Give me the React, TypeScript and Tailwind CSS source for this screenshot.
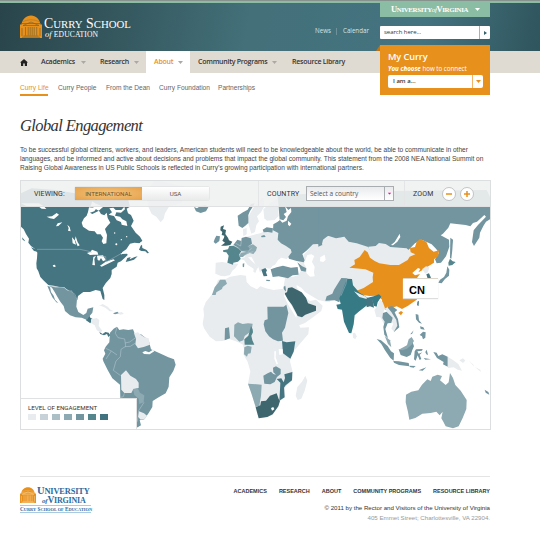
import type { ReactNode } from "react";

const SANS = "font-['Open_Sans','Noto_Sans',sans-serif]";
const ARIAL = "font-['Liberation_Sans',Arial,sans-serif]";
const SERIF = "font-['Liberation_Serif',serif]";
const TECH = "font-[Roboto,sans-serif]";

const C = {
  light: "#e8ecef",
  soft: "#8da9b1",
  mid: "#7295a0",
  dark: "#467582",
  france: "#56868d",
  deep: "#3d666e",
  teal: "#367a86",
  sel: "#e8901c",
  sea: "#ffffff",
};

type Shape = [string, string];

const northAmerica: Shape[] = [
  [C.light, "390,-20 400,20 410,42 424,50 437,67 446,56 450,40 462,20 500,8 510,-40 420,-60"],
  [C.dark, "18,-20 50,-35 120,-30 180,-20 300,-30 340,0 345,20 335,26 339,40 348,45 356,62 348,78 362,98 375,110 382,122 374,130 358,128 345,131 334,148 322,156 318,164 335,154 338,165 328,175 318,184 308,188 305,200 290,210 290,222 286,234 272,250 263,264 268,285 268,300 263,297 256,273 242,270 225,276 205,276 189,288 187,300 180,292 172,278 155,268 148,262 135,262 120,258 100,255 85,241 76,231 70,214 65,205 64,190 66,175 67,158 60,147 48,138 40,128 42,116 33,102 26,88 18,80"],
  [C.mid, "103,257 120,262 135,262 148,263 155,270 164,273 170,270 178,284 186,298 184,320 190,336 205,345 214,339 218,326 235,322 232,338 222,350 216,360 200,353 182,352 165,346 150,333 146,318 136,305 127,290 119,276 111,263"],
  [C.mid, "97,257 105,260 108,276 116,287 120,299 130,309 124,307 112,292 103,272"],
  [C.sea, "222,22 245,24 238,34 225,38 232,42 252,32 258,42 268,46 275,38 278,54 286,68 277,78 270,87 276,105 274,130 265,132 260,124 264,113 257,103 246,103 239,94 222,92 204,80 200,68 207,55 215,47 219,36"],
  [C.sea, "283,25 295,23 302,30 319,30 328,20 330,28 318,38 304,37 300,47 315,50 322,58 334,64 337,78 320,74 318,66 305,61 297,48 281,44 291,37"],
  [C.sea, "232,4 240,10 265,20 251,32 227,18"],
  [C.sea, "18,10 72,10 88,20 94,27 80,26 72,20 38,20"],
  [C.sea, "95,50 111,49 125,39 132,44 117,57 105,55"],
  [C.sea, "123,79 128,70 142,67 130,78"],
  [C.sea, "157,74 164,81 167,94 159,92 161,85"],
  [C.sea, "171,112 179,121 183,134 173,130"],
  [C.sea, "182,109 188,127 194,136 188,139 180,119"],
  [C.sea, "216,159 226,156 231,149 247,155 250,164 236,164 225,165"],
  [C.sea, "235,171 243,167 238,177 240,196 232,195"],
  [C.sea, "246,167 264,166 272,180 264,184 258,174 253,182 248,180"],
  [C.sea, "255,197 272,185 295,178 300,181 283,189 260,200"],
  [C.sea, "113,196 120,194 122,200 116,201"],
  [C.sea, "315,162 341,150 360,148 372,132 378,126 379,138 365,152 366,164 344,171 337,161"],
  [C.dark, "372,149 377,137 381,134 382,144 395,150 402,159 397,160 391,154 379,153"],
  [C.dark, "332,186 337,174 347,171 344,178 359,171 368,169 357,179 344,183"],
  [C.light, "250,319 263,312 278,320 287,329 296,334 284,334 271,323 257,317"],
  [C.mid, "294,340 307,335 312,340 300,343"],
  [C.light, "311,338 320,336 327,342 314,344"],
  [C.dark, "21,112 29,121 30,124 23,119"],
  [C.dark, "48,142 63,148 68,155 57,153"],
];

const southAmerica: Shape[] = [
  [C.dark, "213,19 222,14 226,23 233,27 226,40 213,31"],
  [C.light, "228,28 245,24 253,30 251,48 262,62 256,68 245,60 239,46 228,39"],
  [C.dark, "253,66 263,72 271,66 281,68 286,76 280,81 276,72 267,76 256,72"],
  [C.mid, "285,68 296,56 306,50 313,60 325,58 340,60 354,58 358,68 362,77 378,73 401,91 408,118 424,125 444,134 460,142 477,148 482,164 475,183 463,202 461,230 452,250 431,262 413,273 412,291 401,309 388,328 374,331 378,346 368,352 350,355 318,355 315,224 292,205 278,180 265,154 263,146 271,131 267,121 272,110 283,97"],
  [C.light, "357,70 369,67 378,75 389,82 401,85 405,104 386,111 369,115 361,103 363,87"],
  [C.light, "318,195 333,181 346,197 363,207 371,218 371,234 354,239 349,249 328,249 319,239"],
  [C.soft, "354,237 368,234 375,248 388,256 386,277 373,282 371,266 358,255"],
  [C.light, "372,304 387,310 396,317 390,326 377,329 369,320"],
  [C.sea, "382,127 391,123 402,127 414,119 418,124 404,133 387,132"],
];

const europe: Shape[] = [
  [C.light, "430,130 455,105 500,108 545,115 570,145 600,150 640,130 720,140 780,150 760,200 620,225 600,260 560,275 535,245 520,240 495,270 480,305 468,305 445,300 430,291 405,276 395,264 380,255 380,262 393,280 405,292 420,303 438,299 458,317 454,333 431,350 405,369 384,377 378,357 380,345 360,308 343,279 340,264 345,235 355,232 370,230 385,225 400,200 385,185 405,185 400,165 410,155"],
  [C.light, "230,110 270,100 308,84 325,95 330,120 350,135 367,155 362,165 350,177 334,173 325,179 315,194 307,198 301,206 287,204 275,210 270,218 265,200 257,194 245,172 225,170 215,155 235,130"],
  [C.light, "210,177 232,169 245,183 266,201 261,207 256,219 250,215 251,206 233,195 223,181"],
  [C.light, "137,188 157,186 176,190 205,191 196,205 187,212 180,225 164,229 153,228 136,221"],
  [C.light, "232,62 239,42 252,20 280,-8 283,19 273,37 261,49 267,64 259,75 255,96 244,101 239,84"],
  [C.light, "280,28 298,12 322,-5 326,48 314,60 291,62 283,55"],
  [C.light, "219,88 230,84 230,103 220,109"],
  [C.mid, "203,47 219,37 233,29 243,12 254,10 246,24 240,33 235,45 235,69 226,77 217,84 206,77"],
  [C.mid, "72,21 81,25 91,18 107,16 115,22 108,34 92,39 78,34"],
  [C.deep, "152,80 162,76 159,87 168,90 166,102 174,113 177,121 187,125 181,135 168,137 153,137 165,128 157,122 162,113 163,107 155,105 157,96 151,91"],
  [C.mid, "134,117 139,107 150,109 148,123 137,131 131,126"],
  [C.france, "159,151 174,148 178,138 191,137 207,145 216,151 208,163 212,177 204,185 190,188 189,194 172,188 176,167 169,157 160,156"],
  [C.mid, "190,135 202,119 214,123 215,114 228,110 243,115 246,131 236,138 242,150 233,157 215,153 205,143"],
  [C.soft, "212,158 234,155 240,145 232,139 249,133 261,142 258,152 250,162 239,159 225,165 219,171 207,171"],
  [C.mid, "278,89 290,82 309,85 307,98 294,96 281,97"],
  [C.mid, "273,108 283,105 287,111 275,112"],
  [C.mid, "323,-15 480,-20 490,105 455,112 455,127 457,136 442,132 429,133 411,151 397,162 404,181 401,187 380,183 357,176 355,170 365,157 362,148 348,138 333,130 323,119 325,99 309,91 310,73 322,66 329,61"],
  [C.sea, "327,57 340,61 348,51 341,42 350,36 345,18 355,30 363,24 364,36 354,49 350,62 337,68"],
  [C.sea, "354,62 364,71 359,79 354,74"],
  [C.mid, "302,208 320,202 339,197 363,203 383,201 386,224 368,226 354,235 326,229 308,231"],
  [C.dark, "274,209 286,204 291,211 288,217 292,228 281,229"],
  [C.mid, "382,187 397,199 409,205 407,215 393,212 389,202"],
  [C.sea, "412,165 424,163 433,168 428,179 426,186 434,200 432,216 434,229 420,230 409,219 411,207 402,191"],
  [C.sea, "451,172 464,164 467,179 460,186 450,184"],
  [C.mid, "289,239 301,240 298,244 288,242"],
  [C.mid, "218,191 223,190 222,202 218,200"],
  [C.mid, "341,260 346,257 348,272 341,278"],
  [C.deep, "343,279 351,277 354,264 366,262 395,277 408,293 414,310 438,318 438,332 406,344 396,352 383,348 375,332 366,315 354,299"],
];

const africa: Shape[] = [
  [C.light, "84,-31 106,-32 120,-40 151,-45 168,-43 170,-24 182,-11 201,-2 211,-11 228,-5 250,0 281,-4 287,5 282,18 295,45 305,61 316,79 325,100 331,113 357,112 355,132 330,161 305,192 300,214 308,245 307,270 286,291 283,323 269,334 266,348 247,376 230,381 207,385 201,370 187,317 174,282 181,244 173,216 160,193 162,177 159,164 148,158 133,152 115,146 98,153 78,154 59,140 42,115 38,102 42,76 40,56 47,37 65,14 76,-9"],
  [C.soft, "66,15 74,-8 85,-22 90,-31 106,-31 111,-19 98,-9 96,-3 79,7 77,15"],
  [C.mid, "232,50 281,50 289,44 295,69 289,95 285,113 276,128 279,152 264,154 249,148 237,139 226,124 221,103 224,91 233,88"],
  [C.mid, "105,115 117,112 120,145 104,151"],
  [C.soft, "133,104 144,97 158,102 174,100 188,101 186,114 177,128 164,138 160,151 148,155 132,139"],
  [C.france, "183,108 188,118 189,127 184,137 187,151 193,164 164,164 163,148 175,137"],
  [C.soft, "163,172 173,167 185,170 182,190 174,191 171,200 162,193"],
  [C.dark, "276,153 290,157 316,154 311,185 301,206 279,190"],
  [C.sea, "266,177 278,178 278,193 268,195"],
  [C.sea, "253,184 258,184 257,202 264,221 260,224 253,206"],
  [C.mid, "220,257 233,250 243,245 250,252 258,254 250,247 249,233 258,229 272,237 272,252 261,261 254,276 241,283 223,281"],
  [C.dark, "283,253 307,246 306,271 287,286 282,293 284,322 268,332 270,299 271,278 260,267 274,265 281,277 285,264"],
  [C.soft, "174,281 215,284 213,317 208,347 197,351 184,310"],
  [C.deep, "197,352 211,346 213,334 228,332 240,317 260,310 266,327 270,333 265,349 248,373 232,381 206,385"],
  [C.sea, "243,354 250,351 253,358 246,362"],
  [C.light, "346,257 352,272 344,302 334,326 323,330 317,317 322,291 336,275"],
];

const asia: Shape[] = [
  [C.mid, "-5,-25 500,-30 512,-5 514,55 498,65 490,78 480,98 478,113 462,138 456,126 461,91 474,75 498,50 493,45 471,65 459,69 451,79 437,75 410,72 391,70 385,83 369,101 362,106 387,119 388,140 378,169 363,188 350,190 345,178 357,158 348,146 335,133 305,119 285,130 266,149 110,151 86,125 73,110 48,115 24,107 9,119 5,136 -5,140"],
  [C.light, "145,140 167,138 177,129 197,132 211,141 240,143 260,145 269,154 281,158 285,164 265,174 256,187 240,195 216,200 192,192 169,185 153,166"],
  [C.light, "86,125 110,130 145,141 158,170 130,170 100,160"],
  [C.sea, "213,135 224,126 239,101 241,111 232,125 219,136"],
  [C.sel, "88,203 105,193 103,180 119,171 134,150 143,157 150,173 164,183 178,190 211,195 237,195 263,180 269,170 286,163 272,157 270,145 285,141 290,126 300,117 319,125 327,144 341,155 357,151 355,168 342,178 342,188 325,199 304,212 295,217 301,207 294,204 277,219 285,226 300,222 287,239 305,273 290,299 263,318 246,327 230,319 216,323 202,320 197,329 188,324 186,299 173,287 148,288 124,284 110,272 131,264 159,246 158,232 160,218 136,208 105,205"],
  [C.sel, "235,339 243,333 249,337 243,346"],
  [C.light, "306,208 318,199 328,202 324,217 316,221"],
  [C.dark, "319,223 327,220 333,233 323,236"],
  [C.mid, "391,113 399,119 397,150 394,176 390,174"],
  [C.france, "385,188 390,176 398,184 407,186 397,195 386,197"],
  [C.mid, "382,199 388,209 387,227 375,237 365,250 355,248 360,239 372,231 379,218"],
  [C.mid, "20,289 37,281 42,269 64,234 82,235 77,254 72,274 63,287 58,307 44,301 16,302"],
  [C.teal, "68,271 75,252 81,236 96,237 99,256 117,277 143,293 161,289 177,283 184,290 173,307 170,320 161,317 158,302 144,300 142,315 116,335 104,346 101,373 94,400 87,399 72,365 66,329 53,327 49,314 62,312 58,295"],
  [C.light, "102,274 115,280 140,291 140,297 118,291"],
  [C.dark, "139,298 147,294 158,300 162,323 150,319 140,322"],
];

const oceania: Shape[] = [
  [C.light, "142,48 150,27 159,38 165,55 160,67 162,89 168,115 160,98 151,82 139,81 133,60"],
  [C.light, "165,55 178,51 188,66 202,82 206,105 193,126 184,116 189,103 181,81"],
  [C.mid, "159,69 170,65 177,73 188,83 184,99 173,100 166,117 174,145 163,134 160,111 164,95 157,84"],
  [C.mid, "172,52 186,48 202,60 194,67 204,88 208,112 191,127 202,107 199,90 184,66"],
  [C.soft, "164,137 180,151 184,172 174,162"],
  [C.mid, "140,147 153,151 173,168 183,184 192,190 191,212 181,204 165,181 154,162"],
  [C.mid, "190,213 206,214 236,219 238,229 207,225 192,218"],
  [C.mid, "206,178 218,178 232,166 247,154 252,169 247,180 242,195 230,201 212,195"],
  [C.soft, "210,177 231,166 236,148 245,141 252,153 245,164 231,176 217,181"],
  [C.mid, "254,184 258,178 278,177 276,182 262,184 266,191 277,187 269,194 274,207 269,210 263,196 257,212 252,208"],
  [C.mid, "310,186 320,188 325,198 337,193 353,200 353,230 339,223 341,216 321,204"],
  [C.light, "354,201 369,210 385,222 396,242 383,239 371,232 354,234"],
  [C.mid, "257,72 265,74 267,91 276,101 267,98 258,88"],
  [C.mid, "269,135 279,125 287,127 286,143 279,148 276,139"],
  [C.mid, "270,109 280,112 284,119 272,117"],
  [C.mid, "241,133 251,121 246,132"],
  [C.france, "262,35 267,32 266,48 261,46"],
  [C.light, "68,130 75,128 80,139 76,148 69,143"],
  [C.mid, "266,241 289,232 278,242"],
  [C.mid, "239,227 257,228 251,233 239,231"],
  [C.mid, "286,186 290,179 294,195 289,193"],
  [C.mid, "281,204 303,208 286,209"],
  [C.light, "388,211 399,205 406,212 399,219"],
  [C.light, "416,211 430,224 432,230"],
  [C.light, "434,230 451,239 453,246"],
  [C.soft, "228,314 244,305 265,301 276,284 292,268 302,273 307,260 323,254 336,258 330,271 347,285 356,277 360,249 369,264 376,285 392,302 410,330 409,357 398,384 386,409 369,415 347,409 340,395 334,385 338,365 329,376 319,365 302,369 277,371 256,384 238,389 234,366 227,337"],
  [C.mid, "464,299 475,306 478,314 467,308"],
];

function Layer({ x, y, shapes, children }: { x: number; y: number; shapes: Shape[]; children?: ReactNode }) {
  return (
    <g transform={`translate(${x} ${y}) scale(0.33333)`}>
      {shapes.map(([fill, points], i) => (
        <polygon key={i} points={points} fill={fill} />
      ))}
      {children}
    </g>
  );
}

function WorldMap() {
  return (
    <svg className="block h-[248px] w-[469px]" viewBox="21 181 469 248">
      <Layer x={170} y={200} shapes={europe}>
        <g fill="none" stroke="#c5d3d7" strokeWidth="1.5">
          <path d="M191 136l14 9 10 9-7 13M215 154l20-1 10-8M214 123l-2 15-15-8M230 160l20-5" />
        </g>
      </Layer>
      <Layer x={190} y={290} shapes={africa} />
      <Layer x={320} y={200} shapes={asia}>
        <path d="M63 287l15-35 3-17" fill="none" stroke="#a9bec5" strokeWidth="1.5" />
      </Layer>
      <Layer x={330} y={290} shapes={oceania} />
      <Layer x={15} y={310} shapes={southAmerica}>
        <g fill="none" stroke="#b8cbd1" strokeWidth="1.6">
          <path d="M306 51l-5 19 8 13 20 4 3 22-14 9-2 22-13 13-8 28 22 16M272 115l17 8 17 12M289 123l-16 24M330 99l14-3 18-13M330 110l16-1 14-9M317 262l8-2 3-10M387 277l-16 25-4 33" />
        </g>
      </Layer>
      <Layer x={15} y={200} shapes={northAmerica}>
        <path d="M66 148h129l23 5 12 4M250 167l22 3 1 16 45-25M104 257l31 5 13 1 8 7 10 3 14 10 6 16" fill="none" stroke="#a0b8c0" strokeWidth="1.6" />
        <g fill="#fff">
          <circle cx="319" cy="119" r="2" />
          <circle cx="304" cy="133" r="3" />
          <circle cx="335" cy="110" r="2" />
          <circle cx="299" cy="99" r="2" />
        </g>
      </Layer>
    </svg>
  );
}

function Caret({ color, className = "" }: { color: string; className?: string }) {
  return (
    <svg className={`h-[3px] w-[5px] shrink-0 ${className}`} viewBox="0 0 5 3">
      <path d="M0 0h5L2.5 3z" fill={color} />
    </svg>
  );
}

function Rotunda({ className, line }: { className: string; line: string }) {
  return (
    <svg className={className} viewBox="0 0 22 23" preserveAspectRatio="none">
      <path d="M0 23V9.5h1.5C2.5 4 6 .5 11 .5S19.500 4 20.500 9.500H22V23z" fill="#e8901c" />
      <g fill="none" stroke={line} strokeWidth=".7">
        <path d="M1 8.500h20M3 10.500 11 7l8 3.500zM3.500 21h15M2 22.300h18" />
        <path d="M5.500 12v8.500M8.200 12v8.500M10.200 12v8.500M12.200 12v8.500M14.200 12v8.500M16.700 12v8.500M2 13v8M20 13v8" />
        <path d="M3 6.500Q11 3 19 6.500" strokeWidth=".35" />
      </g>
    </svg>
  );
}

function Header() {
  return (
    <header className="relative flex h-[51px] justify-between border-t border-[#87918e] bg-[linear-gradient(100deg,#29454b_0%,#35575e_22%,#437079_46%,#447380_78%,#2f555d_100%)] pr-[50px] pl-5 shadow-[inset_0_2px_0_#8bbda5]">
      <div className="flex pt-[14px]">
        <Rotunda className="h-[23px] w-[22px]" line="#7e6530" />
        <div className={`ml-[2px] whitespace-nowrap text-white ${SERIF}`}>
          <div className="mt-[1px] h-[14px] text-[13.800px] leading-[15px]">
            C<span className="text-[10.800px]">URRY</span> S<span className="text-[10.800px]">CHOOL</span>
          </div>
          <div className="h-[9px] pl-[1px] text-[7.600px] leading-[8px] tracking-[0.1px]">
            <i className="text-[8.500px]">of</i> EDUCATION
          </div>
        </div>
      </div>
      <div className="flex">
        <div className={`mt-[25px] mr-[12px] flex h-[10px] items-center text-[6.200px] whitespace-nowrap text-[#d4e3e4] ${SANS}`}>
          <span className="w-[15px]">News</span>
          <span className="mx-[6px] h-[7px] w-px bg-[#6d9299]" />
          <span className="w-[25px]">Calendar</span>
        </div>
        <div className="w-[110px]">
          <div className="flex h-[16px] items-center bg-[#8bbda5] pl-[11px] text-white">
            <span className={`w-[76px] text-[6.900px] leading-[10px] font-bold tracking-[-0.36px] whitespace-nowrap ${SERIF}`}>
              <span className="text-[8.500px]">U</span>NIVERSITY<i className="font-normal">of</i>
              <span className="text-[8.500px]">V</span>IRGINIA
            </span>
            <Caret color="#fff" className="ml-[8px]" />
          </div>
          <div className="mt-[9px] flex h-[13px] rounded-[1px] bg-white">
            <span className={`flex-1 pl-1 text-[6px] leading-[13px] tracking-[-0.05px] text-[#333] ${SANS}`}>search here...</span>
            <span className="flex w-[11px] items-center justify-center border-l border-[#9db6bb]">
              <svg className="h-[4px] w-[3px]" viewBox="0 0 3 4"><path d="M0 0v4l3-2z" fill="#35616b" /></svg>
            </span>
          </div>
        </div>
      </div>
      <div className={`absolute top-[44px] right-[50px] z-10 h-[50px] w-[110px] bg-[#e8901c] pt-[5px] pl-[8px] text-white ${SANS}`}>
        <svg className="absolute top-0 left-[-4px] h-[6px] w-[4px]" viewBox="0 0 4 6"><path d="M4 0v6H0z" fill="#bd7416" /></svg>
        <div className="h-[13px] text-[9.200px] leading-[13px] font-semibold tracking-[-0.1px]">My Curry</div>
        <div className="h-[12px] text-[6.200px] leading-[11px] whitespace-nowrap">
          <b className="italic">You choose</b> how to connect
        </div>
        <div className="flex h-[13px] w-[95px] rounded-[2px] bg-white">
          <span className="flex-1 pl-[5px] text-[6px] leading-[13px] font-semibold text-[#333]">I am a...</span>
          <span className="flex w-[11px] items-center justify-center border-l border-[#f2b466]"><Caret color="#e8901c" /></span>
        </div>
      </div>
    </header>
  );
}

function Nav() {
  return (
    <nav className={`flex h-[22px] items-center bg-[#dfdbd3] pl-5 text-[7px] font-semibold whitespace-nowrap text-[#333] ${SANS}`}>
      <svg className="mr-[13px] h-[7px] w-[8px]" viewBox="0 0 8 7"><path d="M4 0l4 3.500H7V7H4.800V4.500H3.200V7H1V3.500H0z" fill="#222" /></svg>
      <a className="flex w-[59px] items-center"><span className="w-[40px] tracking-[-0.25px]">Academics</span><Caret color="#aaa9a5" /></a>
      <a className="flex w-[46px] items-center"><span className="w-[34px] tracking-[-0.25px]">Research</span><Caret color="#aaa9a5" /></a>
      <a className="-mt-[2px] flex h-[24px] w-[44px] items-center bg-white pt-[2px] pl-2 text-[#e8901c]"><span className="w-[24px] tracking-[-0.25px]">About</span><Caret color="#aaa9a5" /></a>
      <a className="flex w-[102px] items-center pl-2"><span className="w-[74px] tracking-[-0.25px]">Community Programs</span><Caret color="#aaa9a5" /></a>
      <a className="tracking-[-0.25px]">Resource Library</a>
    </nav>
  );
}

function Toolbar() {
  return (
    <div className={`absolute inset-x-0 top-0 flex h-[26px] items-center border-b border-[#dfe1e2] bg-[#f0f1f1]/90 text-[7px] whitespace-nowrap text-[#333] ${TECH}`}>
      <span className="ml-[13px] w-[41px] pt-[2px] tracking-[0.1px]">VIEWING:</span>
      <div className="flex h-[13px] w-[134px] rounded-[1px] text-center text-[6.200px] leading-[14px] font-normal shadow-[0_0_1px_#888]">
        <span className="w-[67px] bg-[radial-gradient(#f3c581,#e6a148)] text-[#6b542f]">INTERNATIONAL</span>
        <span className="w-[67px] bg-linear-to-b from-white to-[#e9eaea] text-[#555]">USA</span>
      </div>
      <div className="ml-[49px] flex h-full items-center border-l border-[#e3e5e6] pl-[8px]">
        <span className="w-[39px] pt-[2px] tracking-[0.15px]">COUNTRY</span>
        <div className="-mt-[1px] flex h-[15px] w-[88px] border border-[#a9adaf] bg-linear-to-b from-[#e9ebec] to-white">
          <span className={`flex-1 pl-[3px] text-[6.500px] leading-[13px] font-normal text-[#555] ${SANS}`}>Select a country</span>
          <span className="flex w-[9px] items-center justify-center border-l border-[#a9adaf]"><Caret color="#f0149a" className="scale-75" /></span>
        </div>
      </div>
      <div className="ml-[10px] flex h-full items-center border-l border-[#e3e5e6] pl-[8px]">
        <span className="w-[29px] pt-[2px] tracking-[0.15px]">ZOOM</span>
        {["M4 7h6", "M4 7h6M7 4v6"].map((d) => (
          <svg key={d} className="mr-[4px] h-[14px] w-[14px]" viewBox="0 0 14 14">
            <circle cx="7" cy="7" r="6.500" fill="#fff" stroke="#b4b8ba" strokeWidth=".8" />
            <path d={d} stroke="#e8901c" strokeWidth="1.500" />
          </svg>
        ))}
      </div>
    </div>
  );
}

export default function App() {
  return (
    <div className={`h-[533px] w-[540px] overflow-hidden bg-white ${ARIAL}`}>
      <Header />
      <Nav />
      <div className="flex h-[28px] pt-[10px] pl-5 text-[6.600px] leading-[10px] whitespace-nowrap text-[#666]">
        <a className="h-[13px] w-[28px] border-b-2 border-[#e8901c] text-[#e8901c]">Curry Life</a>
        <a className="ml-[10px] w-[48px]">Curry People</a>
        <a className="w-[53px]">From the Dean</a>
        <a className="w-[59px]">Curry Foundation</a>
        <a>Partnerships</a>
      </div>
      <main className="pl-5">
        <h1 className={`mt-[14px] h-[22px] text-[16.500px] leading-[22px] tracking-[-0.6px] whitespace-nowrap text-[#333] italic ${SERIF}`}>Global Engagement</h1>
        <div className="mt-[8px] h-[35px] text-[6.580px] leading-[9px] whitespace-nowrap text-[#444]">
          <div>To be successful global citizens, workers, and leaders, American students will need to be knowledgeable about the world, be able to communicate in other</div>
          <div>languages, and be informed and active about decisions and problems that impact the global community. This statement from the 2008 NEA National Summit on</div>
          <div>Raising Global Awareness in US Public Schools is reflected in Curry’s growing participation with international partners.</div>
        </div>
        <section className="relative h-[250px] w-[471px] overflow-hidden border border-[#dcdfe0]">
          <WorldMap />
          <Toolbar />
          <div className={`absolute bottom-0 left-0 h-[31px] w-[116px] border-t border-r border-[#dfe1e2] bg-white pt-[5px] pl-[7px] ${TECH}`}>
            <div className="h-[10px] text-[6.200px] leading-[9px] whitespace-nowrap text-[#333]">LEVEL OF ENGAGEMENT</div>
            <div className="flex gap-[4px]">
              <i className="h-[6px] w-[8px] bg-[#e8ecef]" />
              <i className="h-[6px] w-[8px] bg-[#c6d2d7]" />
              <i className="h-[6px] w-[8px] bg-[#acbfc5]" />
              <i className="h-[6px] w-[8px] bg-[#8da9b1]" />
              <i className="h-[6px] w-[8px] bg-[#7295a0]" />
              <i className="h-[6px] w-[8px] bg-[#56868d]" />
              <i className="h-[6px] w-[8px] bg-[#40727f]" />
            </div>
          </div>
          <div className="absolute top-[97px] left-[382px] h-[20px] w-[35px] border-t border-[#dcd6ca] bg-white pl-[6px] text-[11px] leading-[22px] font-bold text-black shadow-[0_1px_1px_#ddd]">CN</div>
        </section>
      </main>
      <footer className="mx-5 mt-[46px] flex w-[470px] justify-between border-t border-[#e4e4e4] pt-[10px]">
        <div className={`w-[71px] text-[#2a6ba0] ${SERIF}`}>
          <div className="flex h-[17px]">
            <Rotunda className="h-[16px] w-[16px]" line="#f9d49b" />
            <div className="ml-[1px] font-semibold whitespace-nowrap">
              <div className="h-[9px] text-[8.400px] leading-[8px] tracking-[-0.15px]"><span className="text-[10.500px]">U</span>NIVERSITY</div>
              <div className="h-[8px] pl-[5px] text-[8px] leading-[8px] tracking-[-0.2px]"><i className="text-[7px]">of</i><span className="text-[9.500px]">V</span>IRGINIA</div>
            </div>
          </div>
          <div className="mt-[1px] h-[8px] border-y border-[#a9cbe0] text-[5.200px] leading-[6px] font-bold whitespace-nowrap">
            C<span className="text-[4.400px]">URRY</span> S<span className="text-[4.400px]">CHOOL OF</span> E<span className="text-[4.400px]">DUCATION</span>
          </div>
        </div>
        <div className="text-right text-[6.130px]">
          <div className="flex h-[9px] gap-[12px] text-[5.500px] leading-[9px] font-bold whitespace-nowrap text-[#333]">
            <a>ACADEMICS</a><a>RESEARCH</a><a>ABOUT</a><a>COMMUNITY PROGRAMS</a><a>RESOURCE LIBRARY</a>
          </div>
          <div className="mt-[7px] leading-[10px] text-[#333]">© 2011 by the Rector and Visitors of the University of Virginia</div>
          <div className="leading-[10px] text-[#999]">405 Emmet Street; Charlottesville, VA 22904.</div>
        </div>
      </footer>
    </div>
  );
}
